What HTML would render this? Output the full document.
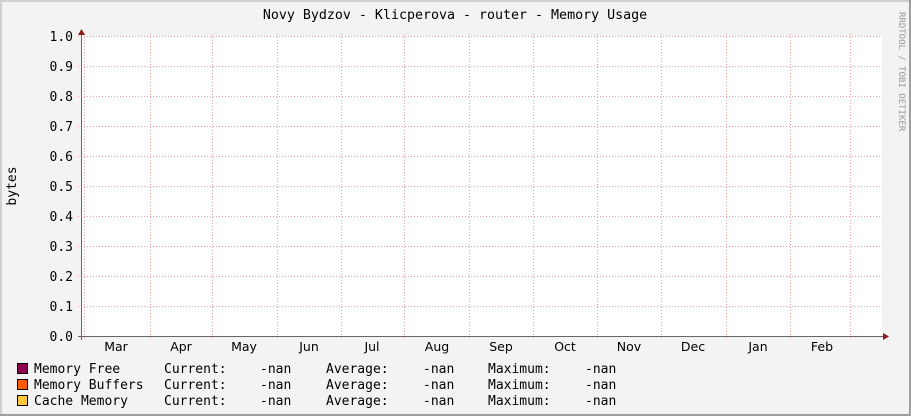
<!DOCTYPE html>
<html><head><style>html,body{margin:0;padding:0;background:#f3f3f3}</style></head><body>
<svg width="911" height="416" xmlns="http://www.w3.org/2000/svg" style="display:block">
<rect x="0" y="0" width="911" height="416" fill="#f3f3f3"/>
<rect x="0" y="0" width="911" height="2" fill="#cfcfcf"/>
<rect x="0" y="0" width="2" height="416" fill="#cfcfcf"/>
<rect x="909" y="0" width="2" height="416" fill="#9e9e9e"/>
<rect x="0" y="414" width="911" height="2" fill="#9e9e9e"/>
<rect x="82" y="36" width="800" height="300" fill="#fff"/>
<g stroke="#f0a0a0" stroke-width="1" stroke-dasharray="1,2" shape-rendering="crispEdges">
<line x1="78" y1="36.5" x2="882" y2="36.5"/><line x1="78" y1="66.5" x2="882" y2="66.5"/><line x1="78" y1="96.5" x2="882" y2="96.5"/><line x1="78" y1="126.5" x2="882" y2="126.5"/><line x1="78" y1="156.5" x2="882" y2="156.5"/><line x1="78" y1="186.5" x2="882" y2="186.5"/><line x1="78" y1="216.5" x2="882" y2="216.5"/><line x1="78" y1="246.5" x2="882" y2="246.5"/><line x1="78" y1="276.5" x2="882" y2="276.5"/><line x1="78" y1="306.5" x2="882" y2="306.5"/>
<line x1="84.5" y1="34" x2="84.5" y2="340"/><line x1="150.5" y1="34" x2="150.5" y2="340"/><line x1="212.5" y1="34" x2="212.5" y2="340"/><line x1="277.5" y1="34" x2="277.5" y2="340"/><line x1="341.5" y1="34" x2="341.5" y2="340"/><line x1="404.5" y1="34" x2="404.5" y2="340"/><line x1="469.5" y1="34" x2="469.5" y2="340"/><line x1="533.5" y1="34" x2="533.5" y2="340"/><line x1="597.5" y1="34" x2="597.5" y2="340"/><line x1="661.5" y1="34" x2="661.5" y2="340"/><line x1="726.5" y1="34" x2="726.5" y2="340"/><line x1="790.5" y1="34" x2="790.5" y2="340"/><line x1="850.5" y1="34" x2="850.5" y2="340"/>
</g>
<g stroke="#666" stroke-width="1" shape-rendering="crispEdges">
<line x1="81.5" y1="34" x2="81.5" y2="340"/>
<line x1="78" y1="336.5" x2="884" y2="336.5"/>
</g>
<polygon points="78,35 81.5,29 85,35" fill="#8b1a1a"/>
<polygon points="883,333 889,336.5 883,340" fill="#8b1a1a"/>
<g font-family="'DejaVu Sans Mono','Liberation Mono',monospace" font-size="13" fill="#000" text-anchor="end">
<text x="73" y="41">1.0</text><text x="73" y="71">0.9</text><text x="73" y="101">0.8</text><text x="73" y="131">0.7</text><text x="73" y="161">0.6</text><text x="73" y="191">0.5</text><text x="73" y="221">0.4</text><text x="73" y="251">0.3</text><text x="73" y="281">0.2</text><text x="73" y="311">0.1</text><text x="73" y="341">0.0</text>
</g>
<text x="455" y="19" text-anchor="middle" font-family="'DejaVu Sans Mono',monospace" font-size="13.3">Novy Bydzov - Klicperova - router - Memory Usage</text>
<text transform="translate(16,186) rotate(-90)" text-anchor="middle" font-family="'DejaVu Sans Mono',monospace" font-size="13">bytes</text>
<text transform="translate(899,12) rotate(90)" font-family="'DejaVu Sans Mono',monospace" font-size="9" fill="#999">RRDTOOL / TOBI OETIKER</text>
<g font-family="'DejaVu Sans','Liberation Sans',sans-serif" font-size="12.5" text-anchor="middle">
<text x="116" y="351">Mar</text><text x="181" y="351">Apr</text><text x="244" y="351">May</text><text x="309" y="351">Jun</text><text x="372" y="351">Jul</text><text x="437" y="351">Aug</text><text x="501" y="351">Sep</text><text x="565" y="351">Oct</text><text x="629" y="351">Nov</text><text x="693" y="351">Dec</text><text x="758" y="351">Jan</text><text x="822" y="351">Feb</text>
</g>
<rect x="17.5" y="363.5" width="10" height="10" fill="#8e0052" stroke="#000"/>
<rect x="17.5" y="379.5" width="10" height="10" fill="#ff5a00" stroke="#000"/>
<rect x="17.5" y="395.5" width="10" height="10" fill="#ffc83c" stroke="#000"/>
<g font-family="'DejaVu Sans Mono','Liberation Mono',monospace" font-size="13">
<text x="34" y="373">Memory Free</text><text x="34" y="389">Memory Buffers</text><text x="34" y="405">Cache Memory</text>
<text x="164" y="373">Current:</text><text x="164" y="389">Current:</text><text x="164" y="405">Current:</text>
<text x="260" y="373">-nan</text><text x="260" y="389">-nan</text><text x="260" y="405">-nan</text>
<text x="326" y="373">Average:</text><text x="326" y="389">Average:</text><text x="326" y="405">Average:</text>
<text x="423" y="373">-nan</text><text x="423" y="389">-nan</text><text x="423" y="405">-nan</text>
<text x="488" y="373">Maximum:</text><text x="488" y="389">Maximum:</text><text x="488" y="405">Maximum:</text>
<text x="585" y="373">-nan</text><text x="585" y="389">-nan</text><text x="585" y="405">-nan</text>
</g>
</svg>
</body></html>
